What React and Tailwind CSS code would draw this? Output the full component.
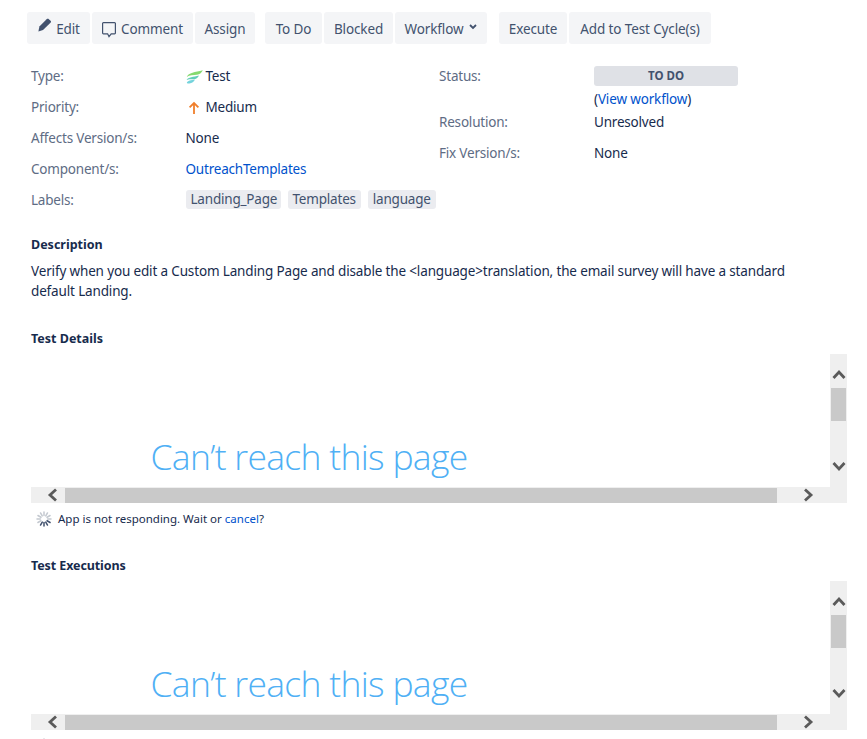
import React from 'react';

const font = "font-['Noto_Sans','Open_Sans',sans-serif]";

const ToolButton = ({ children, className = '' }) => (
    <div className={`h-8 pt-[2px] flex items-center justify-center rounded-[3px] bg-[#f4f5f7] text-[#42526e] text-[13.5px] tracking-[-0.12px] ${className}`}>
        {children}
    </div>
);

// linha de campo: rótulo + valor
const Field = ({ label, children, labelWidth = 'w-[155px]', className = 'h-[31px]' }) => (
    <div className={`flex items-center ${className}`}>
        <div className={`${labelWidth} shrink-0 text-[#5e6c84]`}>{label}</div>
        <div className="flex items-center text-[#172b4d]">{children}</div>
    </div>
);

const Chevron = ({ dir }) => {
    const paths = {
        up: 'M1.5 10 L7 4 L12.5 10',
        down: 'M1.5 4 L7 10 L12.5 4',
        left: 'M10 1.5 L4 7 L10 12.5',
        right: 'M4 1.5 L10 7 L4 12.5',
    };
    return (
        <svg width="14" height="14" viewBox="0 0 14 14" fill="none" stroke="#5a5a5a" strokeWidth="2.8">
            <path d={paths[dir]} />
        </svg>
    );
};

// quadro do iframe com as barras de rolagem
const Frame = () => (
    <div className="ml-[31px] w-[816px] h-[149px] flex flex-col">
        <div className="flex flex-1 min-h-0">
            <div className="flex-1 overflow-hidden pl-[119.5px] pt-[78px]">
                <div className="font-['Open_Sans',sans-serif] font-light text-[#4fb0f5] text-[35.5px] leading-[48px] tracking-[-0.7px] whitespace-nowrap">Can’t reach this page</div>
            </div>
            <div className="w-[17px] bg-[#efefef] flex flex-col items-center">
                <div className="h-[34px] flex items-end pb-[6px]"><Chevron dir="up" /></div>
                <div className="w-[15px] h-[33px] bg-[#c9c9c9]" />
                <div className="flex-1 flex items-end pb-[14px]"><Chevron dir="down" /></div>
            </div>
        </div>
        <div className="h-4 bg-[#efefef] flex items-center">
            <div className="w-[34px] flex justify-center pl-[9px]"><Chevron dir="left" /></div>
            <div className="w-[712px] h-[15px] bg-[#c9c9c9]" />
            <div className="flex-1 flex justify-center pr-[9px]"><Chevron dir="right" /></div>
        </div>
    </div>
);

const Spinner = () => (
    <svg width="16" height="16" viewBox="0 0 16 16" strokeWidth="1.5" strokeLinecap="round">
        {Array.from({ length: 12 }).map((_, i) => {
            const a = (i * Math.PI) / 6;
            const shade = i >= 4 && i <= 7 ? '#42526e' : '#c4c9d0';
            return (
                <line key={i} x1={8 + Math.sin(a) * 3.5} y1={8 - Math.cos(a) * 3.5} x2={8 + Math.sin(a) * 7} y2={8 - Math.cos(a) * 7} stroke={shade} />
            );
        })}
    </svg>
);

const Label = ({ children, className = '' }) => (
    <span className={`h-[19px] px-[5px] flex items-center rounded-[3px] bg-[#ebecf0] text-[#42526e] text-[13.5px] tracking-[-0.2px] ${className}`}>{children}</span>
);

const SpinnerRow = ({ children }) => (
    <div className="flex items-center h-4 mt-2 pl-[36px] gap-[6px] text-[11.5px] tracking-[0px]">
        <Spinner />
        {children}
    </div>
);

export default function App() {
    return (
        <div className={`${font} w-[867px] h-[739px] overflow-hidden bg-white text-[13.5px] tracking-[-0.2px] text-[#172b4d]`}>
            {/* barra de ações */}
            <div className="flex pl-[27px] pt-3 h-[44px]">
                <ToolButton className="w-[63px] mr-[2px] gap-[4px]">
                    <svg width="15" height="15" viewBox="0 0 15 15" className="-mt-[7px]" fill="#42526e">
                        <path d="M9.6 1.2 C10.4 0.6 11.2 0.6 11.9 1.2 L13.6 2.8 C14.2 3.4 14.1 4.2 13.5 4.8 L6 12 L1.4 13.4 L2.4 8.6 Z" />
                    </svg>
                    Edit
                </ToolButton>
                <ToolButton className="w-[101px] mr-[2px] gap-[5px]">
                    <svg width="14" height="17" viewBox="0 0 14 17" fill="none" stroke="#42526e" strokeWidth="1.2">
                        <path d="M1.4 1.6 H12.6 A0.8 0.8 0 0 1 13.4 2.4 V12 A0.8 0.8 0 0 1 12.6 12.8 H9.2 L7 15.6 L5.6 12.8 H1.4 A0.8 0.8 0 0 1 0.6 12 V2.4 A0.8 0.8 0 0 1 1.4 1.6 Z" />
                    </svg>
                    Comment
                </ToolButton>
                <ToolButton className="w-[60px] mr-[10px]">Assign</ToolButton>
                <ToolButton className="w-[57px] mr-[2px]">To Do</ToolButton>
                <ToolButton className="w-[69px] mr-[2px]">Blocked</ToolButton>
                <ToolButton className="w-[92px] mr-3 gap-[6px]">
                    Workflow
                    <svg width="8" height="6" viewBox="0 0 8 6" className="-mt-[4px]" fill="none" stroke="#42526e" strokeWidth="1.8">
                        <path d="M1 1 L4 4 L7 1" />
                    </svg>
                </ToolButton>
                <ToolButton className="w-[68px] mr-[2px]">Execute</ToolButton>
                <ToolButton className="w-[142px]">Add to Test Cycle(s)</ToolButton>
            </div>

            {/* detalhes */}
            <div className="flex pl-[31px] pt-[17px]">
                <div className="w-[408px]">
                    <Field label="Type:" labelWidth="w-[154.5px]">
                        <svg width="17" height="14" viewBox="0 0 17 14" className="mr-[3px]" fill="none">
                            <path d="M0.8 7 C2.5 2.5 9 2.2 16.8 0.2 C15.5 3 13.5 4.4 11 4.8 C7.5 5.2 3.5 5 0.8 7 Z" fill="#86d96f" />
                            <path d="M0.6 10 C2 6.8 7.5 7 13 5.4 C12 7.8 10 9 7.5 9.2 C5 9.4 2.5 8.8 0.6 10 Z" fill="#62cdb8" />
                            <path d="M0.8 13 C1.6 10.6 5 10.4 9 9.6 C8 11.8 6 13.4 3.4 13.6 C2.4 13.7 1.4 13.5 0.8 13 Z" fill="#74d3dc" />
                        </svg>
                        Test
                    </Field>
                    <Field label="Priority:" labelWidth="w-[154.5px]">
                        <svg width="16" height="14" viewBox="0 0 16 14" className="mr-[4px]" fill="none" stroke="#f07f2c" strokeWidth="1.8">
                            <path d="M8 13 V2 M3.6 6.4 L8 2 L12.4 6.4" />
                        </svg>
                        Medium
                    </Field>
                    <Field label="Affects Version/s:" labelWidth="w-[154.5px]">None</Field>
                    <Field label="Component/s:" labelWidth="w-[154.5px]"><span className="text-[#0052cc]">OutreachTemplates</span></Field>
                    <Field label="Labels:" labelWidth="w-[154.5px]">
                        <div className="flex gap-[7px] -mt-[3px]">
                            <Label className="w-[95px]">Landing_Page</Label>
                            <Label>Templates</Label>
                            <Label>language</Label>
                        </div>
                    </Field>
                </div>
                <div className="flex-1">
                    <div className="flex h-[46px]">
                        <div className="w-[155px] shrink-0 pt-[5px] leading-[20px] text-[#5e6c84]">Status:</div>
                        <div>
                            <div className="w-[144px] h-5 mt-[5px] rounded-[3px] bg-[#dfe1e6] flex items-center justify-center text-[11.5px] font-bold tracking-normal text-[#42526e]">TO DO</div>
                            <div className="leading-[26px] tracking-[-0.15px] text-[#172b4d]">(<span className="text-[#0052cc]">View workflow</span>)</div>
                        </div>
                    </div>
                    <Field label="Resolution:">Unresolved</Field>
                    <Field label="Fix Version/s:">None</Field>
                </div>
            </div>

            {/* descrição */}
            <div className="pl-[31px] pt-[19px]">
                <div className="h-5 leading-5 font-bold text-[12.5px] tracking-[0px]">Description</div>
                <div className="mt-[6px] w-[790px] leading-5 tracking-[-0.15px]">
                    Verify when you edit a Custom Landing Page and disable the &lt;language&gt;translation, the email survey will have a standard default Landing.
                </div>
                <div className="mt-[28px] h-5 leading-5 font-bold text-[12.5px] tracking-[0px]">Test Details</div>
            </div>

            <div className="mt-[5px]"><Frame /></div>

            <SpinnerRow>
                <span>App is not responding. Wait or <span className="text-[#0052cc]">cancel</span>?</span>
            </SpinnerRow>

            <div className="pl-[31px] mt-[29px] h-5 leading-5 font-bold text-[12.5px] tracking-[-0.1px]">Test Executions</div>

            <div className="mt-[5px]"><Frame /></div>

            <SpinnerRow />
        </div>
    );
}
